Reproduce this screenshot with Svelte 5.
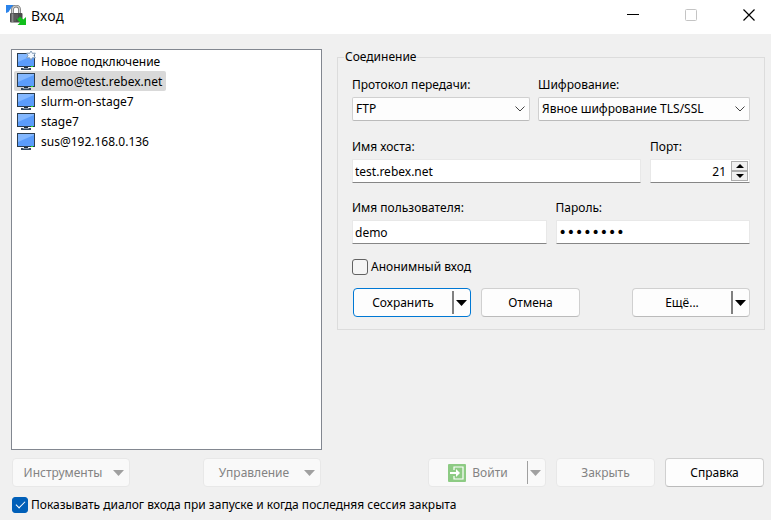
<script>
  let sessions = $state(['Новое подключение', 'demo@test.rebex.net', 'slurm-on-stage7', 'stage7', 'sus@192.168.0.136']);
  let selected = $state(1);
  let host = $state('test.rebex.net');
  let port = $state('21');
  let user = $state('demo');
  let password = $state('password');
  let anonymous = $state(false);
  let showDialog = $state(true);

  const step = (n) => (port = String(Math.max(0, Number(port) + n)));
</script>

{#snippet arrow()}
  <svg class="arrow" width="11" height="6" viewBox="0 0 11 6" aria-hidden="true"><path d="M0 0h11L5.5 6z" fill="currentColor" /></svg>
{/snippet}

<div class="window">
  <header>
    <svg width="20" height="20" viewBox="0 0 20 20" aria-hidden="true">
      <path d="M0 0h8L5.500 2.500 2.500 7 0 8z" fill="#2b83ea" />
      <path d="M6.500 9V4.500a3.500 3.500 0 0 1 7 0V9" fill="none" stroke="#777" stroke-width="2.800" />
      <path d="M6.500 9V4.500a3.500 3.500 0 0 1 7 0V9" fill="none" stroke="#d2d2d2" stroke-width="1.200" />
      <rect x="4" y="8" width="12.500" height="9.500" rx="1" fill="#4b4b4b" />
      <path d="M5.500 8.500h2v8.500h-2z" fill="#8c8c8c" />
      <path d="M9 9v7.500M11 9v5" stroke="#6c6c6c" />
      <path d="M20 12v8h-8.500l2.500-2.500-3-3 3-3 3.200 3z" fill="#12bf1d" />
    </svg>
    <h1>Вход</h1>
    <div class="caption">
      <button aria-label="Свернуть"><svg width="12" height="12"><path d="M0 5.500h12" stroke="#000" /></svg></button>
      <button aria-label="Развернуть" disabled><svg width="12" height="12"><rect x=".5" y=".5" width="11" height="11" rx="1" fill="none" stroke="#c4c4c4" /></svg></button>
      <button aria-label="Закрыть окно"><svg width="12" height="12"><path d="M.5.5l11 11M11.500.5l-11 11" stroke="#000" stroke-width="1.200" /></svg></button>
    </div>
  </header>

  <main>
    <section class="left">
      <ul>
        {#each sessions as name, i}
          <li>
            <button class="session" class:selected={i === selected} onclick={() => (selected = i)}>
              <svg width="20" height="20" viewBox="0 0 20 20" aria-hidden="true">
                <path d="M8 15h4v2H8z" fill="#22303e" />
                <path d="M5 17h10v2H5z" fill="#34495e" />
                <path d="M7 17h6v1H7z" fill="#8798a8" />
                <rect x="1" y="2" width="18" height="14" fill="#2c3e50" />
                <rect x="2" y="3" width="16" height="12" fill="#5b9dfb" />
                <path d="M2 3h16v1L2 11z" fill="#84b8ff" />
                <path d="M15 15.500h2" stroke="#27e02b" />
                {#if i === 0}
                  <path d="M15 0l1.400 2.300 2.900-.2-1.300 2.400 1.300 2.400-2.900-.2L15 9l-1.400-2.300-2.900.2L12 4.500l-1.300-2.400 2.900.2z" fill="#f2f8ff" stroke="#7d97b3" stroke-width=".9" />
                {/if}
              </svg>
              <span>{name}</span>
            </button>
          </li>
        {/each}
      </ul>
      <div class="row tools">
        <button class="btn menu" disabled><span>Инструменты</span>{@render arrow()}</button>
        <button class="btn menu" disabled><span>Управление</span>{@render arrow()}</button>
      </div>
    </section>

    <section class="right">
      <fieldset>
        <legend>Соединение</legend>
        <div class="row choices">
          <div class="field protocol">
            <label for="protocol">Протокол передачи:</label>
            <div class="select">
              <select id="protocol"><option>FTP</option><option>SFTP</option></select>
              <svg width="10" height="6" aria-hidden="true"><path d="M.5.5L5 5 9.500.5" /></svg>
            </div>
          </div>
          <div class="field grow">
            <label for="encryption">Шифрование:</label>
            <div class="select">
              <select id="encryption"><option>Явное шифрование TLS/SSL</option><option>Без шифрования</option></select>
              <svg width="10" height="6" aria-hidden="true"><path d="M.5.5L5 5 9.500.5" /></svg>
            </div>
          </div>
        </div>
        <div class="row inputs">
          <div class="field grow">
            <label for="host">Имя хоста:</label>
            <input class="text" id="host" type="text" bind:value={host} />
          </div>
          <div class="field port">
            <label for="port">Порт:</label>
            <div class="spin">
              <input class="text" id="port" type="text" inputmode="numeric" bind:value={port} />
              <div class="steps">
                <button aria-label="Больше" onclick={() => step(1)}><svg width="8" height="4"><path d="M4 0l4 4H0z" /></svg></button>
                <button aria-label="Меньше" onclick={() => step(-1)}><svg width="8" height="4"><path d="M0 0h8L4 4z" /></svg></button>
              </div>
            </div>
          </div>
        </div>
        <div class="row inputs">
          <div class="field grow">
            <label for="user">Имя пользователя:</label>
            <input class="text" id="user" type="text" bind:value={user} />
          </div>
          <div class="field grow">
            <label for="password">Пароль:</label>
            <input class="text secret" id="password" type="password" bind:value={password} />
          </div>
        </div>
        <label class="check"><input type="checkbox" bind:checked={anonymous} /><span>Анонимный вход</span></label>
        <div class="row actions">
          <div class="split primary">
            <button class="main">Сохранить</button>
            <button class="drop" aria-label="Варианты сохранения">{@render arrow()}</button>
          </div>
          <button class="btn">Отмена</button>
          <div class="split last">
            <button class="main">Ещё...</button>
            <button class="drop" aria-label="Другие действия">{@render arrow()}</button>
          </div>
        </div>
      </fieldset>
      <div class="row bottom">
        <div class="split off">
          <button class="main" disabled>
            <svg width="18" height="18" viewBox="0 0 18 18" aria-hidden="true">
              <rect width="18" height="18" rx="1" fill="#8dcb84" />
              <path d="M6 6V3h9v12H6v-3" fill="none" stroke="#fff" stroke-width="1.200" />
              <path d="M2 8h6V5l4 4-4 4v-3H2z" fill="#fff" />
            </svg>
            Войти
          </button>
          <button class="drop" aria-label="Варианты входа" disabled>{@render arrow()}</button>
        </div>
        <button class="btn" disabled>Закрыть</button>
        <button class="btn">Справка</button>
      </div>
    </section>
  </main>

  <label class="check startup">
    <input type="checkbox" bind:checked={showDialog} />
    <span>Показывать диалог входа при запуске и когда последняя сессия закрыта</span>
  </label>
</div>

<style>
  :global(body) { margin: 0; background: #f0f0f0; }
  .window, .window * { box-sizing: border-box; }
  .window {
    min-height: 100vh;
    display: flex;
    flex-direction: column;
    background: #f0f0f0;
    color: #000;
    font: 12px/16px "Noto Sans", sans-serif;
  }
  button, input, select { font: inherit; color: inherit; margin: 0; }
  button { padding: 0; border: 0; background: none; white-space: nowrap; }
  svg { display: block; flex: none; }
  .row { display: flex; }
  .grow { flex: 1 1 0; min-width: 0; }

  header { display: flex; align-items: center; height: 34px; padding-left: 6px; background: #fff; }
  header > svg { margin-bottom: 4px; }
  h1 { flex: 1; margin: 0 0 0 5px; padding-bottom: 3px; font: 14px/20px "Open Sans", sans-serif; }
  .caption { display: flex; gap: 14px; padding-bottom: 4px; }
  .caption button { display: grid; place-items: center; width: 44px; height: 28px; }

  main { flex: 1; display: flex; gap: 15px; padding: 15px 6px 0 11px; }
  .left { flex: 311 1 0; display: flex; flex-direction: column; }
  .right { flex: 428 1 0; display: flex; flex-direction: column; justify-content: space-between; }

  ul { flex: 1; margin: 0; padding: 1px 2px; list-style: none; background: #fff; border: 1px solid #828790; }
  li { display: flex; }
  .session { display: flex; align-items: center; gap: 5px; height: 20px; padding: 0 4px 0 2px; border-radius: 2px; }
  .session.selected { background: #d9d9d9; }
  .session span { padding-top: 1px; }

  .tools { justify-content: space-between; padding: 8px 1px 0; }
  .btn {
    width: 99px;
    height: 29px;
    border: 1px solid #d0d0d0;
    border-bottom-color: #bbb;
    border-radius: 4px;
    background: #fdfdfd;
  }
  .btn:disabled, .off { color: #838383; border-color: #e8e8e8; background: #f9f9f9; }
  .btn.menu { display: flex; align-items: center; width: 118px; padding-right: 5px; }
  .btn.menu span { flex: 1; }
  .btn .arrow, .off .arrow { color: #a0a0a0; }

  fieldset { margin: 0; padding: 0 14px 12px; border: 1px solid #dcdcdc; min-width: 0; }
  legend { margin-left: -8px; padding: 0 1px; }
  .field { display: flex; flex-direction: column; gap: 4px; }
  .protocol { width: 178px; }
  .choices { gap: 8px; padding: 12px 0 1px; }
  .inputs { gap: 9px; padding-top: 17px; }
  .port { width: 100px; }

  .select { display: grid; align-items: center; }
  .select > * { grid-area: 1 / 1; }
  .select svg { justify-self: end; margin-right: 5px; fill: none; stroke: #444; pointer-events: none; }
  select {
    width: 100%;
    height: 24px;
    padding: 0 20px 0 3px;
    appearance: none;
    border: 1px solid #d0d0d0;
    border-bottom-color: #bbb;
    border-radius: 2px;
    background: #fdfdfd;
  }
  .text {
    width: 100%;
    height: 24px;
    padding: 0 2px;
    border: 1px solid #e8e8e8;
    border-bottom-color: #868686;
    border-radius: 1px;
    background: #fff;
  }
  .secret { font-family: "DejaVu Sans", sans-serif; font-size: 14px; }
  .spin { display: grid; align-items: center; }
  .spin > * { grid-area: 1 / 1; }
  .spin .text { padding-right: 23px; text-align: right; }
  .steps { justify-self: end; display: flex; flex-direction: column; margin-right: 2px; }
  .steps button { display: grid; place-items: center; width: 17px; height: 10px; border: 1px solid #adadad; background: #f0f0f0; }

  .check { display: flex; align-items: center; gap: 3px; padding-top: 15px; }
  .check input {
    flex: none;
    display: grid;
    place-items: center;
    width: 16px;
    height: 16px;
    appearance: none;
    border: 1px solid #626262;
    border-radius: 3px;
    background: #f5f5f5;
  }
  .check input:checked { border-color: #005fb8; background: #005fb8; }
  .check input:checked::before {
    content: "";
    width: 8px;
    height: 4px;
    margin-bottom: 3px;
    border: solid #fff;
    border-width: 0 0 1px 1px;
    transform: rotate(-45deg);
  }
  .startup { padding: 10px 12px 7px; }

  .actions { gap: 10px; padding: 13px 0 0 1px; }
  .split {
    display: flex;
    align-items: stretch;
    width: 118px;
    height: 29px;
    border: 1px solid #d0d0d0;
    border-bottom-color: #bbb;
    border-radius: 4px;
    background: #fdfdfd;
  }
  .split.primary { border-color: #0078d4; }
  .split.last { margin-left: auto; }
  .split .main { flex: 1; display: flex; align-items: center; justify-content: center; gap: 6px; }
  .split .drop { width: 18px; margin: 2px 0; padding-left: 2px; border-left: 2px solid #808080; }
  .split.off { border-color: #e8e8e8; background: #f9f9f9; }
  .split.off .drop { border-left: 1px solid #a0a0a0; }
  .off .main, .off .drop { color: #838383; }
  .bottom { justify-content: flex-end; gap: 10px; padding-right: 1px; }
</style>
